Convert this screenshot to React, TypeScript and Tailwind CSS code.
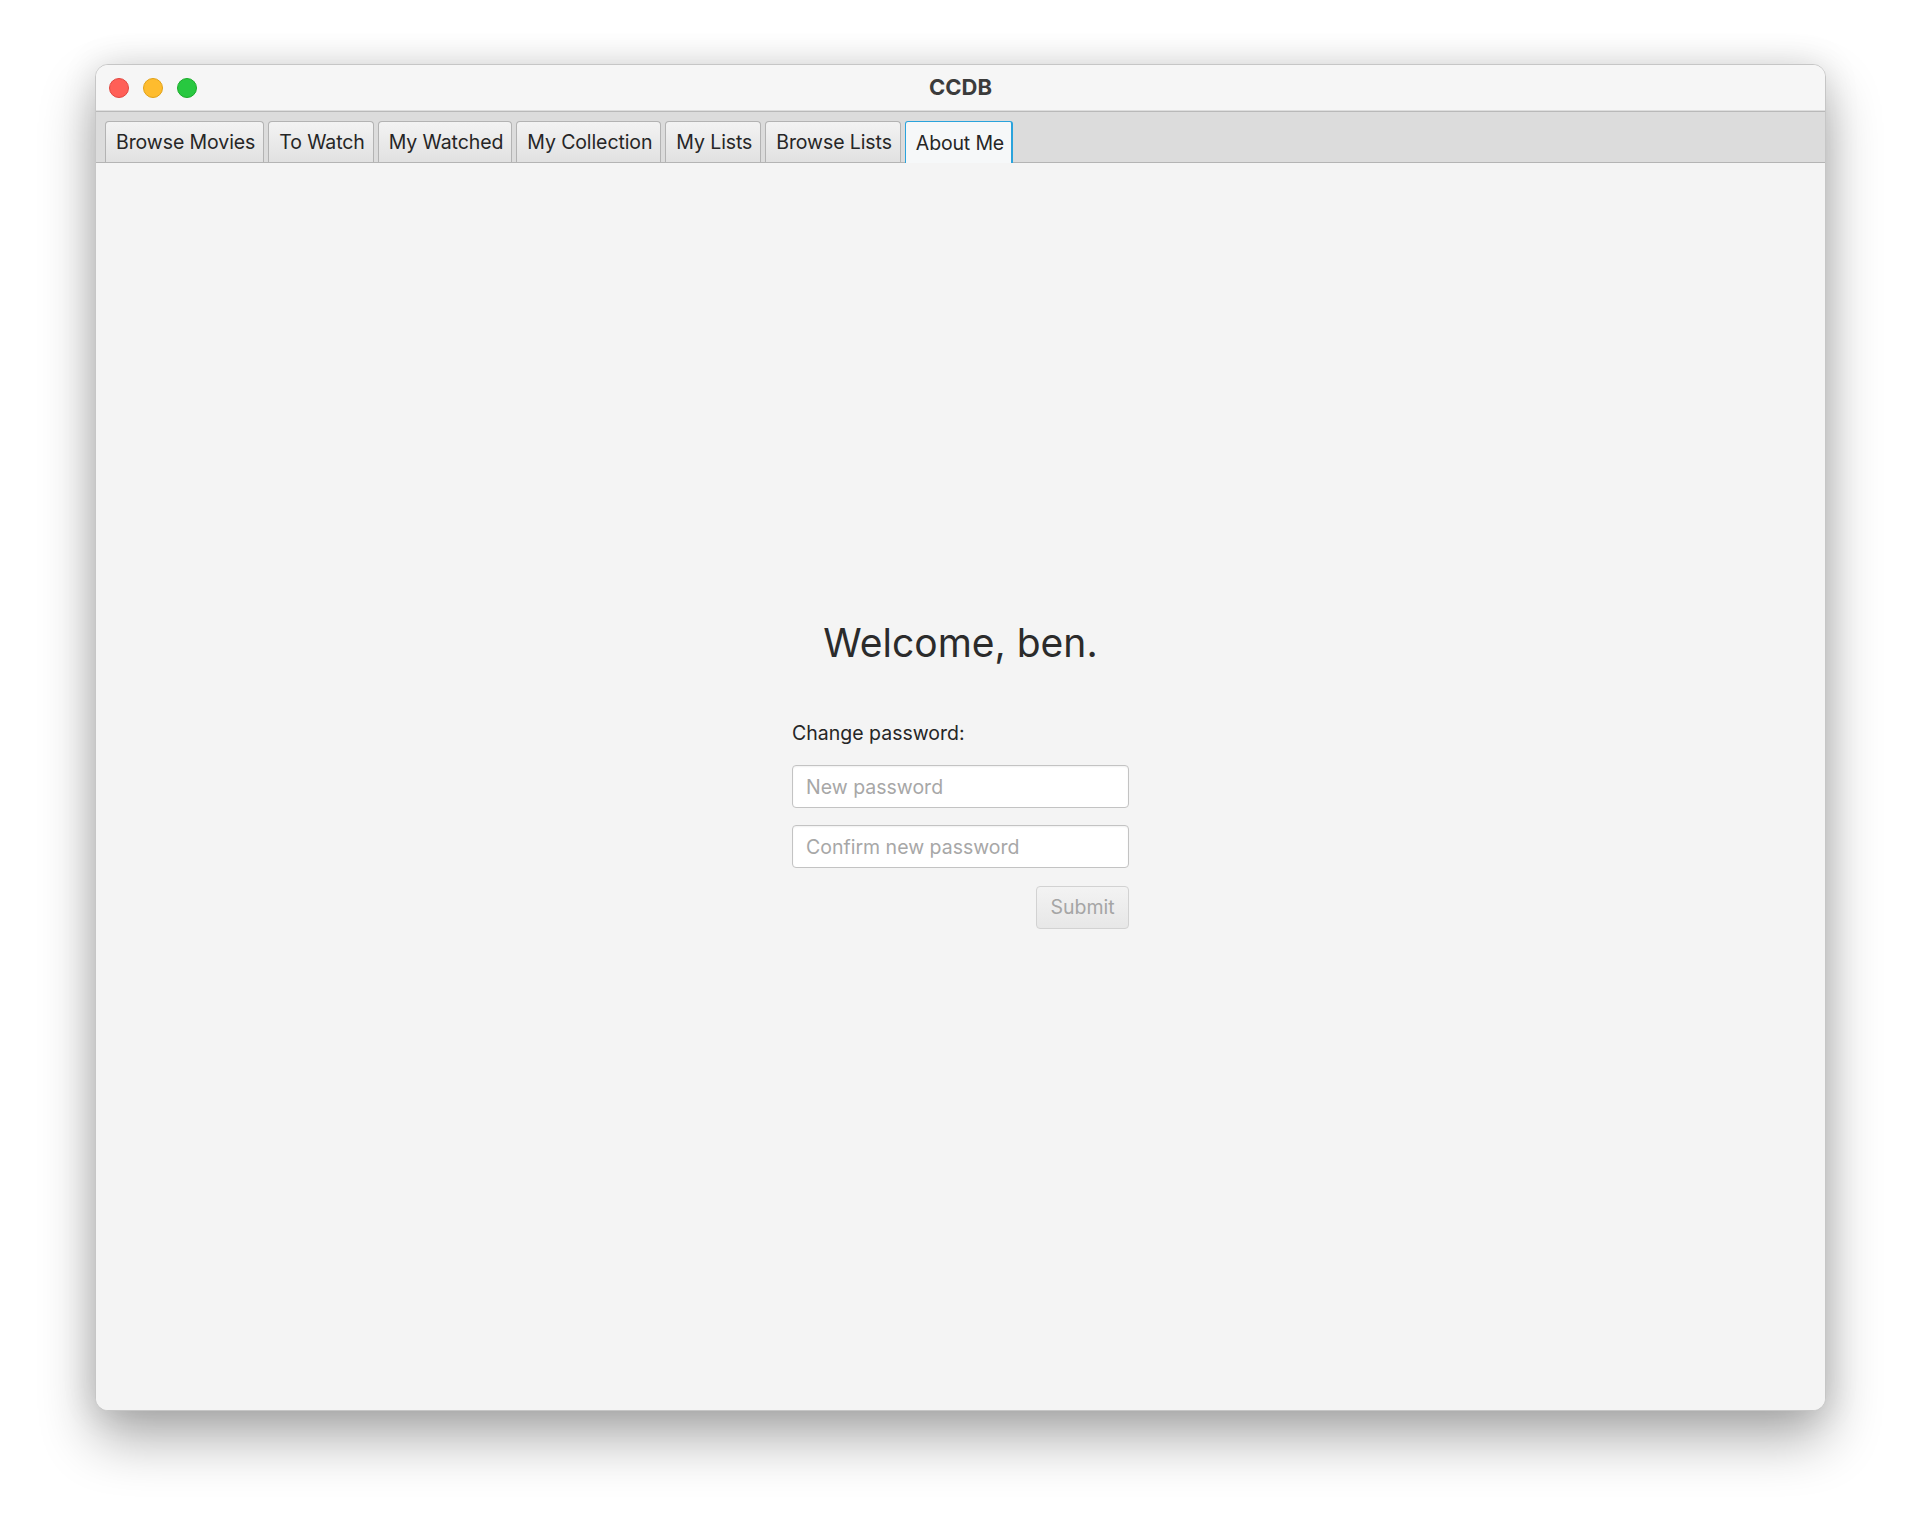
const FONT = "font-['Inter','Noto_Sans',sans-serif]";

const tabs = ["Browse Movies", "To Watch", "My Watched", "My Collection", "My Lists", "Browse Lists", "About Me"];
const ACTIVE = "About Me";

function TrafficLights() {
  return (
    <div className="flex items-center gap-[14px] pl-[13px]">
      <span className="w-[20px] h-[20px] rounded-full bg-[#ff5f57] border border-[#e2463f]" />
      <span className="w-[20px] h-[20px] rounded-full bg-[#febc2e] border border-[#e1a116]" />
      <span className="w-[20px] h-[20px] rounded-full bg-[#28c840] border border-[#1aab29]" />
    </div>
  );
}

function TabBar() {
  return (
    <div className="flex items-end gap-[4px] h-[52px] pl-[9px] bg-[#dcdcdc] border-t border-t-[#b9b9b9] border-b border-b-[#b4b4b4]">
      {tabs.map((t) => {
        const active = t === ACTIVE;
        return (
          <div
            key={t}
            className={
              active
                ? "h-[42px] -mb-px pl-[10px] pr-[7px] pt-[2px] flex items-center rounded-t-[3px] bg-[#f6f8f9] border-t border-l border-r-2 border-[#2aa3dc] text-[19.5px] tracking-[-0.008em] text-[#262626]"
                : "h-[41px] pl-[10px] pr-[8px] pt-[2px] flex items-center rounded-t-[4px] bg-gradient-to-b from-[#f3f3f3] to-[#e1e1e1] border border-b-0 border-[#b3b3b3] text-[19.5px] tracking-[-0.005em] text-[#262626]"
            }
          >
            {t}
          </div>
        );
      })}
    </div>
  );
}

function AboutMe() {
  return (
    <div className="flex-1 bg-[#f4f4f4] flex flex-col items-center pt-[456px]">
      <h1 className="text-[39px] leading-[48px] text-[#2b2b2b] font-normal">Welcome, ben.</h1>
      <div className="w-[337px] mt-[54px] flex flex-col">
        <label className="text-[19.5px] leading-[24px] text-[#262626]">Change password:</label>
        <input
          type="password"
          placeholder="New password"
          className="mt-[20px] h-[43px] px-[13px] rounded-[4px] bg-white border border-[#c3c3c3] shadow-[inset_0_1px_2px_rgba(0,0,0,0.06)] text-[19.5px] text-[#333] placeholder:text-[#a7a7a7] outline-none"
        />
        <input
          type="password"
          placeholder="Confirm new password"
          className="mt-[17px] h-[43px] px-[13px] rounded-[4px] bg-white border border-[#c3c3c3] shadow-[inset_0_1px_2px_rgba(0,0,0,0.06)] text-[19.5px] text-[#333] placeholder:text-[#a7a7a7] outline-none"
        />
        <div className="flex justify-end mt-[18px]">
          <button
            disabled
            className="h-[43px] w-[93px] rounded-[4px] border border-[#d2d2d2] bg-gradient-to-b from-[#f3f3f3] to-[#e7e7e7] text-[19.5px] text-[#a5a5a5]"
          >
            Submit
          </button>
        </div>
      </div>
    </div>
  );
}

export default function App() {
  return (
    <div className={`w-full h-[1535px] bg-white pt-[64px] pl-[95px] ${FONT}`}>
      <div className="w-[1731px] h-[1347px] flex flex-col rounded-[13px] overflow-hidden border border-[#c6c6c6] bg-[#f6f6f6] shadow-[0_28px_55px_rgba(0,0,0,0.32),0_0_35px_rgba(0,0,0,0.12)]">
        <div className="relative h-[46px] shrink-0 flex items-center bg-[#f6f6f6] border-b border-[#dedede]">
          <TrafficLights />
          <div className="absolute inset-0 flex items-center justify-center text-[22px] font-bold text-[#3b3b3b]">
            CCDB
          </div>
        </div>
        <TabBar />
        <AboutMe />
      </div>
    </div>
  );
}
